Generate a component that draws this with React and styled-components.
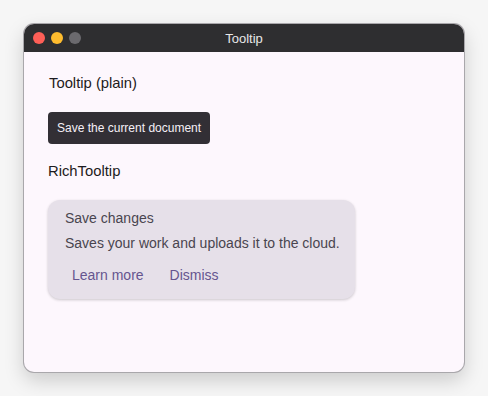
import React from 'react';
import styled, { createGlobalStyle } from 'styled-components';

const GlobalStyle = createGlobalStyle`
  html, body {
    margin: 0;
    padding: 0;
    background: #f6f6f6;
    font-family: "Liberation Sans", Arial, sans-serif;
  }
`;

const Page = styled.div`
  width: 488px;
  height: 396px;
  padding: 24px;
  box-sizing: border-box;
`;

const Window = styled.div`
  width: 440px;
  height: 348px;
  border-radius: 10px;
  overflow: hidden;
  background: #fdf7fd;
  box-shadow: 0 0 0 1px #a9a7ab, 0 8px 20px rgba(0, 0, 0, 0.18);
  display: flex;
  flex-direction: column;
`;

const TitleBar = styled.div`
  height: 28px;
  background: #2e2e30;
  display: flex;
  align-items: center;
  position: relative;
  padding-left: 9px;
  gap: 6px;
`;

const Light = styled.span`
  width: 12px;
  height: 12px;
  border-radius: 50%;
  background: ${(p) => p.$color};
`;

const Title = styled.div`
  position: absolute;
  left: 0;
  right: 0;
  text-align: center;
  color: #e8e8e8;
  font-size: 13px;
`;

const Content = styled.div`
  padding: 22px 24px;
  display: flex;
  flex-direction: column;
  align-items: flex-start;
`;

const Label = styled.div`
  font-size: 14.8px;
  color: #1d1b20;
  line-height: 18px;
  margin-left: ${(p) => p.$indent || 0}px;
  margin-top: ${(p) => p.$top || 0}px;
`;

const PlainTip = styled.div`
  margin-top: 20px;
  background: #322f35;
  color: #f5eff7;
  font-size: 12px;
  border-radius: 4px;
  height: 32px;
  padding: 0 9px;
  display: flex;
  align-items: center;
  box-sizing: border-box;
`;

const RichTip = styled.div`
  margin-top: 20px;
  width: 307px;
  box-sizing: border-box;
  background: #e6e0e9;
  border-radius: 12px;
  padding: 9px 12px 15px 17px;
  box-shadow: 0 1px 3px rgba(0, 0, 0, 0.2);
`;

const RichTitle = styled.div`
  font-size: 14px;
  color: #49454f;
  line-height: 18px;
`;

const RichText = styled.div`
  margin-top: 7px;
  font-size: 14px;
  color: #49454f;
  line-height: 18px;
  white-space: nowrap;
`;

const Actions = styled.div`
  display: flex;
  gap: 26px;
  margin-top: 14px;
  padding-left: 7px;
`;

const Action = styled.span`
  font-size: 14px;
  color: #65558f;
  line-height: 18px;
`;

export default function App() {
  return (
    <>
      <GlobalStyle />
      <Page>
        <Window>
          <TitleBar>
            <Light $color="#fe5f57" />
            <Light $color="#febc2e" />
            <Light $color="#6b6a6e" />
            <Title>Tooltip</Title>
          </TitleBar>
          <Content>
            <Label $indent={1}>Tooltip (plain)</Label>
            <PlainTip>Save the current document</PlainTip>
            <Label $top={18}>RichTooltip</Label>
            <RichTip>
              <RichTitle>Save changes</RichTitle>
              <RichText>Saves your work and uploads it to the cloud.</RichText>
              <Actions>
                <Action>Learn more</Action>
                <Action>Dismiss</Action>
              </Actions>
            </RichTip>
          </Content>
        </Window>
      </Page>
    </>
  );
}
